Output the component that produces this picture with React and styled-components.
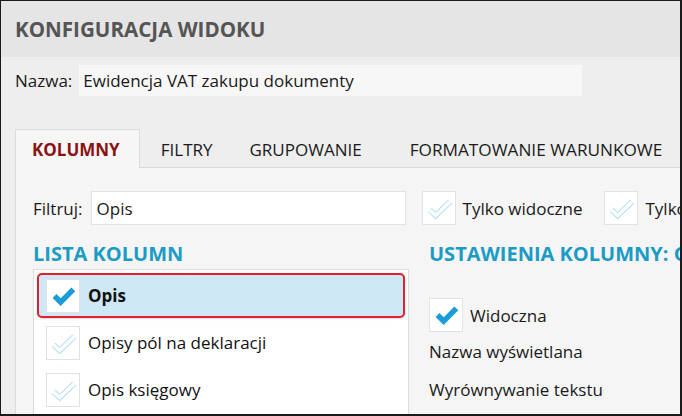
import React from "react";
import styled, { createGlobalStyle } from "styled-components";

const Global = createGlobalStyle`
  html, body { margin: 0; padding: 0; background: #000; }
  body { font-family: "Open Sans", "Noto Sans", sans-serif; }
`;

const Frame = styled.div`
  width: 682px;
  height: 416px;
  box-sizing: border-box;
  border-style: solid;
  border-color: #1a1a1a;
  border-width: 1px 2px 2px 1px;
  background: #eeeeee;
  overflow: hidden;
  display: flex;
  flex-direction: column;
`;

const Header = styled.div`
  height: 56px;
  flex: none;
  background: #e5e5e5;
  display: flex;
  align-items: center;
  padding-left: 14px;
`;

const Title = styled.h1`
  margin: 0;
  font-size: 20.6px;
  font-weight: 700;
  color: #555555;
  white-space: nowrap;
`;

const NameRow = styled.div`
  display: flex;
  align-items: center;
  gap: 7px;
  margin-top: 8px;
  padding-left: 14px;
  font-size: 17px;
  color: #1a1a1a;
`;

const NameInput = styled.div`
  width: 503px;
  height: 31px;
  background: #f7f7f7;
  display: flex;
  align-items: center;
  padding-left: 4px;
  box-sizing: border-box;
  white-space: nowrap;
`;

const TabStrip = styled.div`
  display: flex;
  align-items: flex-end;
  margin-top: 33px;
  margin-left: 14px;
  border-bottom: 1px solid #d9d9d9;
  width: 900px;
`;

const Tab = styled.div`
  height: 39px;
  box-sizing: border-box;
  display: flex;
  align-items: center;
  padding: 0 ${(p) => p.$pr}px 0 ${(p) => p.$pl}px;
  font-size: ${(p) => p.$fs || 17}px;
  white-space: nowrap;
  color: ${(p) => (p.$active ? "#8a1212" : "#1a1a1a")};
  font-weight: ${(p) => (p.$active ? 700 : 400)};
  background: ${(p) => (p.$active ? "#f6f6f6" : "transparent")};
  border: 1px solid ${(p) => (p.$active ? "#dcdcdc" : "transparent")};
  border-bottom: none;
  margin-bottom: -1px;
  position: relative;
  z-index: 1;
`;

const Panel = styled.div`
  flex: 1;
  margin-left: 14px;
  width: 900px;
  background: #f5f5f5;
  border-left: 1px solid #dcdcdc;
  padding: 23px 0 0 17px;
  box-sizing: border-box;
  display: flex;
  flex-direction: column;
`;

const FilterRow = styled.div`
  display: flex;
  align-items: center;
  font-size: 17px;
  color: #1a1a1a;
`;

const FilterInput = styled.div`
  margin-left: 8px;
  width: 315px;
  height: 34px;
  box-sizing: border-box;
  background: #ffffff;
  border: 1px solid #e3e3e3;
  display: flex;
  align-items: center;
  padding-left: 5px;
`;

const CheckOption = styled.div`
  display: flex;
  align-items: center;
  gap: 7px;
  margin-left: ${(p) => p.$ml || 0}px;
  margin-top: ${(p) => p.$mt || 0}px;
  white-space: nowrap;
`;

const Box = styled.div`
  width: 34px;
  height: 34px;
  box-sizing: border-box;
  background: #ffffff;
  border: 1px solid #e2e2e2;
  flex: none;
  display: flex;
  align-items: center;
  justify-content: center;
`;

const Columns = styled.div`
  display: flex;
  flex: 1;
  margin-top: 16px;
  min-height: 0;
`;

const LeftCol = styled.div`
  width: 376px;
  display: flex;
  flex-direction: column;
`;

const RightCol = styled.div`
  margin-left: 20px;
  display: flex;
  flex-direction: column;
  font-size: 17px;
  color: #1a1a1a;
`;

const SectionTitle = styled.h2`
  margin: 0;
  font-size: 20px;
  font-weight: 700;
  color: #1b9bc6;
  line-height: 26px;
  white-space: nowrap;
`;

const List = styled.div`
  flex: 1;
  margin-top: 2px;
  background: #ffffff;
  border: 1px solid #dcdcdc;
  border-bottom: none;
  padding: 3px 3px 0 3px;
  display: flex;
  flex-direction: column;
  gap: 2px;
`;

const Row = styled.div`
  height: 45px;
  box-sizing: border-box;
  display: flex;
  align-items: center;
  gap: 8px;
  padding-left: ${(p) => (p.$selected ? 7 : 9)}px;
  font-size: 17px;
  color: #111;
  font-weight: ${(p) => (p.$selected ? 700 : 400)};
  background: ${(p) => (p.$selected ? "#cee9f5" : "transparent")};
  border: ${(p) => (p.$selected ? "2px solid #e3202b" : "none")};
  border-radius: 5px;
  box-shadow: ${(p) => (p.$selected ? "0 1px 2px rgba(0,0,0,0.15)" : "none")};
`;

const RightItem = styled.div`
  height: 38px;
  display: flex;
  align-items: center;
  white-space: nowrap;
`;

const Check = ({ on }) =>
  on ? (
    <svg width="34" height="34" viewBox="0 0 34 34">
      <path d="M8 17 L14.5 23.5 L28 10" fill="none" stroke="#1b9bd8" strokeWidth="5.8" strokeLinejoin="miter" />
    </svg>
  ) : (
    <svg width="34" height="34" viewBox="0 0 34 34">
      <path d="M7 19 L13.5 25 L29 10" fill="none" stroke="#b9e1f3" strokeWidth="6" strokeLinejoin="miter" />
      <path d="M7 19 L13.5 25 L29 10" fill="none" stroke="#ffffff" strokeWidth="3.6" strokeLinejoin="miter" />
    </svg>
  );

export default function App() {
  return (
    <>
      <Global />
      <Frame>
        <Header>
          <Title>KONFIGURACJA WIDOKU</Title>
        </Header>
        <NameRow>
          <span>Nazwa:</span>
          <NameInput>Ewidencja VAT zakupu dokumenty</NameInput>
        </NameRow>
        <TabStrip>
          <Tab $active $pl={16} $pr={19}>KOLUMNY</Tab>
          <Tab $pl={20} $pr={17}>FILTRY</Tab>
          <Tab $pl={18} $pr={22}>GRUPOWANIE</Tab>
          <Tab $pl={24} $pr={20} $fs={17.2}>FORMATOWANIE WARUNKOWE</Tab>
        </TabStrip>
        <Panel>
          <FilterRow>
            <span>Filtruj:</span>
            <FilterInput>Opis</FilterInput>
            <CheckOption $ml={16}>
              <Box><Check /></Box>
              <span>Tylko widoczne</span>
            </CheckOption>
            <CheckOption $ml={22}>
              <Box><Check /></Box>
              <span>Tylko zaznaczone</span>
            </CheckOption>
          </FilterRow>
          <Columns>
            <LeftCol>
              <SectionTitle>LISTA KOLUMN</SectionTitle>
              <List>
                <Row $selected>
                  <Box><Check on /></Box>
                  <span>Opis</span>
                </Row>
                <Row>
                  <Box><Check /></Box>
                  <span>Opisy pól na deklaracji</span>
                </Row>
                <Row>
                  <Box><Check /></Box>
                  <span>Opis księgowy</span>
                </Row>
              </List>
            </LeftCol>
            <RightCol>
              <SectionTitle>USTAWIENIA KOLUMNY: OPIS</SectionTitle>
              <CheckOption $mt={31}>
                <Box><Check on /></Box>
                <span>Widoczna</span>
              </CheckOption>
              <RightItem>Nazwa wyświetlana</RightItem>
              <RightItem>Wyrównywanie tekstu</RightItem>
            </RightCol>
          </Columns>
        </Panel>
      </Frame>
    </>
  );
}
